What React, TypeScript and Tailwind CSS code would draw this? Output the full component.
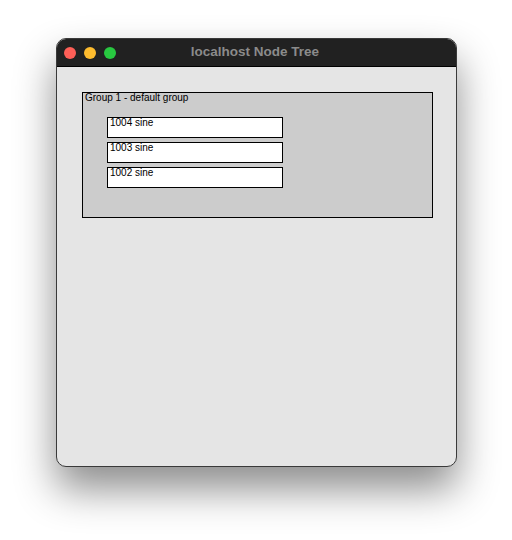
const nodes = ["1004 sine", "1003 sine", "1002 sine"];

export default function App() {
  return (
    <div className="h-[540px] w-[512px] bg-white pl-[56px] pt-[38px] font-['Liberation_Sans',Arial,sans-serif]">
      <div className="flex h-[429px] w-[401px] flex-col overflow-hidden rounded-[10px] border border-[#3a3a3a] bg-[#e5e5e5] shadow-[0_22px_40px_rgba(0,0,0,0.45)]">
        <div className="relative flex h-[28px] shrink-0 items-center border-b border-black bg-[#212121] pl-[7px]">
          <div className="flex gap-[8px]">
            <span className="h-[12px] w-[12px] rounded-full bg-[#fe5f57]" />
            <span className="h-[12px] w-[12px] rounded-full bg-[#febc2e]" />
            <span className="h-[12px] w-[12px] rounded-full bg-[#28c840]" />
          </div>
          <div className="absolute inset-0 flex items-center justify-center pr-[3px] text-[13.5px] font-bold text-[#8b8b8b]">
            localhost Node Tree
          </div>
        </div>
        <div className="pl-[25px] pt-[25px]">
          <div className="h-[126px] w-[351px] border border-black bg-[#cccccc]">
            <div className="pl-[2px] text-[10px] leading-[10px] text-black">
              Group 1 - default group
            </div>
            <div className="ml-[24px] mt-[14px] flex flex-col gap-[4px]">
              {nodes.map((n) => (
                <div
                  key={n}
                  className="h-[21px] w-[176px] border border-black bg-white pl-[2px] text-[10px] leading-[10px] text-black"
                >
                  {n}
                </div>
              ))}
            </div>
          </div>
        </div>
      </div>
    </div>
  );
}
